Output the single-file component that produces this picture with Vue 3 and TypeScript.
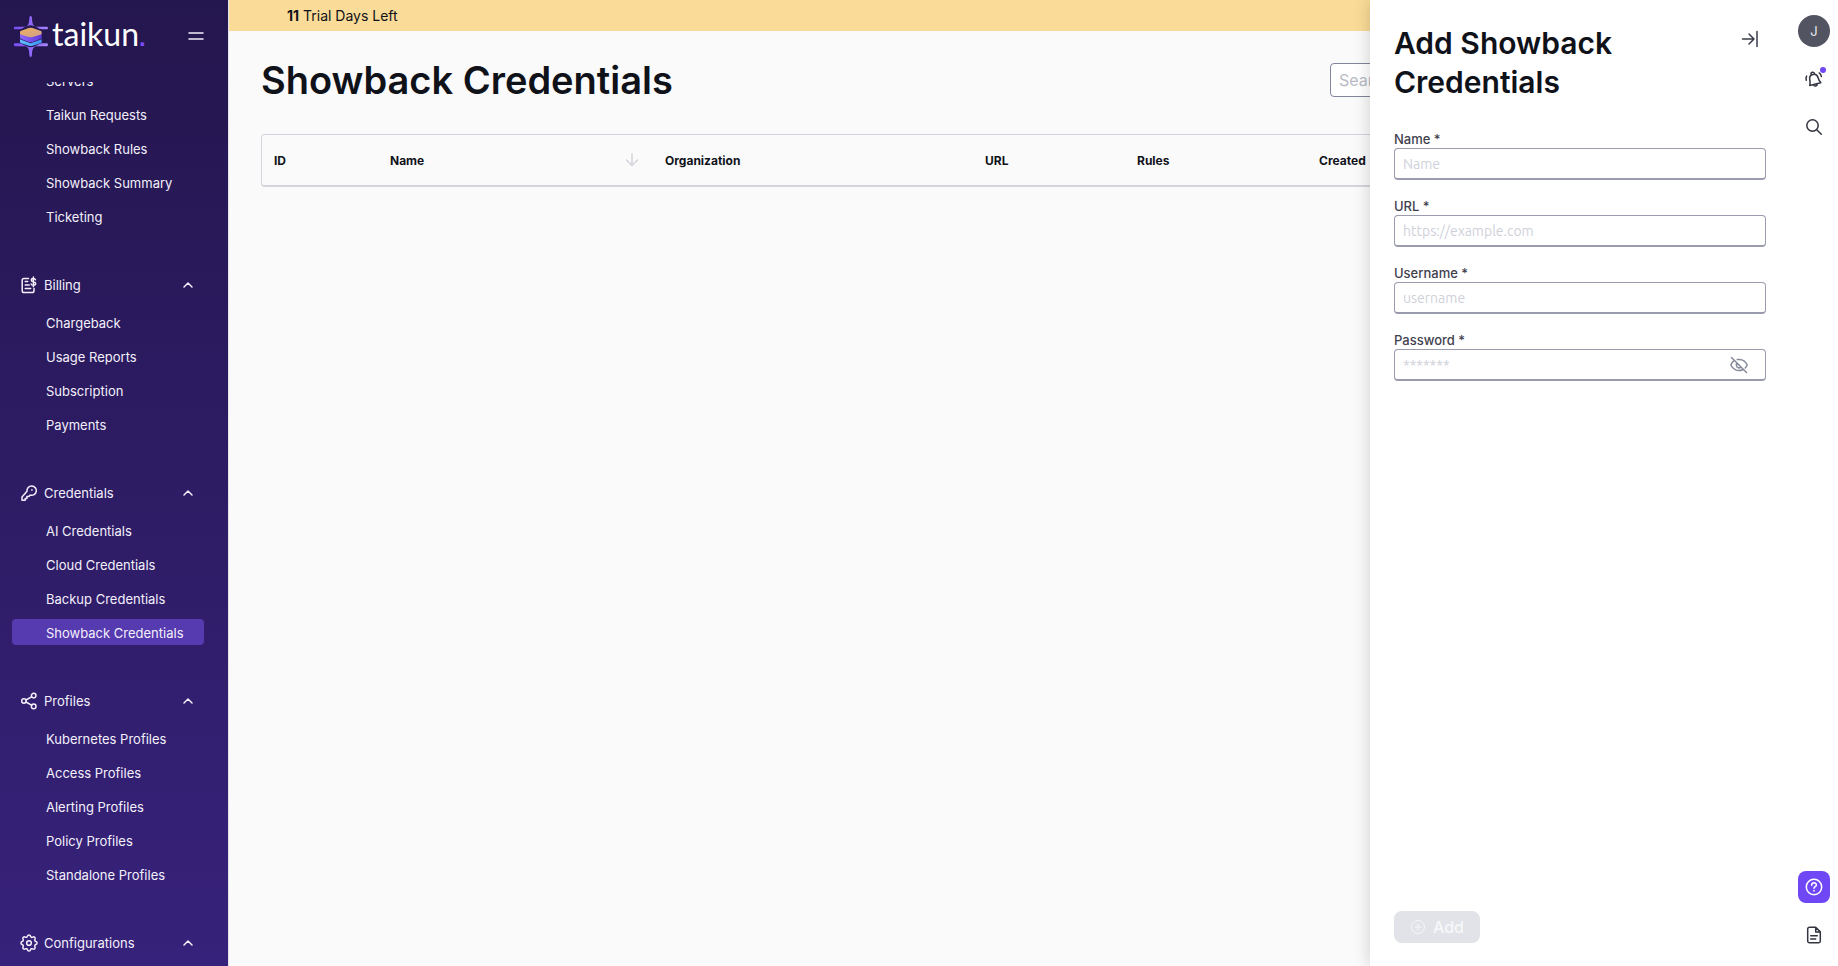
<script setup lang="ts">
import { onMounted, ref } from 'vue'

interface NavGroup {
  title?: string
  icon?: 'billing' | 'key' | 'share' | 'gear'
  items: string[]
}

interface Field {
  id: string
  label: string
  placeholder: string
  type: 'text' | 'password'
}

const groups: NavGroup[] = [
  { items: ['Servers', 'Taikun Requests', 'Showback Rules', 'Showback Summary', 'Ticketing'] },
  { title: 'Billing', icon: 'billing', items: ['Chargeback', 'Usage Reports', 'Subscription', 'Payments'] },
  {
    title: 'Credentials',
    icon: 'key',
    items: ['AI Credentials', 'Cloud Credentials', 'Backup Credentials', 'Showback Credentials'],
  },
  {
    title: 'Profiles',
    icon: 'share',
    items: ['Kubernetes Profiles', 'Access Profiles', 'Alerting Profiles', 'Policy Profiles', 'Standalone Profiles'],
  },
  { title: 'Configurations', icon: 'gear', items: [] },
]

const activeItem = 'Showback Credentials'

const fields: Field[] = [
  { id: 'name', label: 'Name *', placeholder: 'Name', type: 'text' },
  { id: 'url', label: 'URL *', placeholder: 'https://example.com', type: 'text' },
  { id: 'username', label: 'Username *', placeholder: 'username', type: 'text' },
  { id: 'password', label: 'Password *', placeholder: '*******', type: 'password' },
]

const form = ref<Record<string, string>>({ name: '', url: '', username: '', password: '' })
const search = ref('')
const nav = ref<HTMLElement | null>(null)

onMounted(() => {
  if (nav.value) nav.value.scrollTop = 15
})
</script>

<template>
  <div class="app">
    <aside class="sidebar">
      <div class="brand-row">
        <a class="brand" href="#">
          <svg class="brand-mark" viewBox="0 0 102 123" aria-hidden="true">
            <defs>
              <linearGradient id="wing" x1="0" x2="1" y1="0" y2="0">
                <stop offset="0" stop-color="#7a4cf5" />
                <stop offset="1" stop-color="#a585fb" />
              </linearGradient>
              <linearGradient id="gold" x1="0" x2="1" y1="0" y2="1">
                <stop offset="0" stop-color="#eeb05c" />
                <stop offset="1" stop-color="#cfa08f" />
              </linearGradient>
              <linearGradient id="violet" x1="0" x2="1" y1="0" y2="0">
                <stop offset="0" stop-color="#8f68fb" />
                <stop offset="1" stop-color="#6036dc" />
              </linearGradient>
              <linearGradient id="sky" x1="0" x2="1" y1="0" y2="0">
                <stop offset="0" stop-color="#62bcff" />
                <stop offset="1" stop-color="#3f94fb" />
              </linearGradient>
            </defs>
            <path
              fill="url(#wing)"
              d="M50 0c3 0 4 3 4 8 1 14 3 23 14 24h31c4 0 4 8 0 8H85c-8 0-10-3-16-6-7-3-12-6-19-6s-12 3-19 6c-6 3-8 6-16 6H2c-4 0-3-8 1-8h29c11-1 13-10 14-24 0-5 1-8 4-8z"
            />
            <path
              fill="url(#wing)"
              d="M50 123c3 0 4-3 4-8 1-14 3-23 14-24h31c4 0 4-9 0-9H85c-8 0-10 3-16 6-7 3-12 6-19 6s-12-3-19-6c-6-3-8-6-16-6H2c-4 0-3 9 1 9h29c11 1 13 10 14 24 0 5 1 8 4 8z"
            />
            <path fill="url(#sky)" d="M18 70l32 12 33-12v8c0 2-2 3-4 4L56 89q-6 2-12 0L22 82c-2-1-4-2-4-4z" />
            <path fill="url(#violet)" d="M18 52l32 12 33-12v13c0 2-2 3-4 4L56 78q-6 2-12 0L22 69c-2-1-4-2-4-4z" />
            <path fill="url(#gold)" d="M44 36q6-2 12 0l23 8c4 1 4 3 4 6s0 4-4 6l-23 7q-6 2-12 0l-22-7c-4-2-4-3-4-6s0-5 4-6z" />
          </svg>
          <span class="brand-name">taikun<span class="brand-dot">.</span></span>
        </a>
        <button class="menu-toggle" type="button" aria-label="Collapse menu">
          <svg viewBox="0 0 24 24" aria-hidden="true"><path d="M5 9h14M5 15h14" /></svg>
        </button>
      </div>

      <nav ref="nav" class="nav">
        <section v-for="(group, index) in groups" :key="index" class="group">
          <button v-if="group.title" class="group-head" type="button">
            <svg v-if="group.icon === 'billing'" class="group-icon" viewBox="0 0 16 18" aria-hidden="true">
              <path d="M7.500 2.500H3A1.800 1.800 0 0 0 1.200 4.300v10.400A1.800 1.800 0 0 0 3 16.500h8.200a1.800 1.800 0 0 0 1.800-1.800V12.500M4.200 5.500h2.500M4.200 9h4M4.200 12.500h5.500" />
              <path d="M14.500 3.800c-.4-.9-1.200-1.200-2.200-1.200-1.200 0-2 .6-2 1.600 0 2.200 4.400 1 4.400 3.400 0 1.100-1 1.700-2.300 1.700-1.100 0-2-.4-2.300-1.400M12.400 1v9.800" />
            </svg>
            <svg v-else-if="group.icon === 'key'" class="group-icon" viewBox="0 0 16 18" aria-hidden="true">
              <path d="M6 7.200a4.700 4.700 0 1 1 3.200 3.900L7.600 12.600H5.900v1.900H4.200v1.800H1v-3.200z" />
              <path d="M10.700 5.900h.4" />
            </svg>
            <svg v-else-if="group.icon === 'share'" class="group-icon" viewBox="0 0 16 18" aria-hidden="true">
              <circle cx="2.900" cy="9" r="2.200" />
              <circle cx="12.700" cy="3.600" r="2.300" />
              <circle cx="12.700" cy="14.400" r="2.300" />
              <path d="M4.900 8l5.700-3.200M4.900 10l5.700 3.200" />
            </svg>
            <svg v-else class="group-icon gear" viewBox="3 2 18 20" aria-hidden="true">
              <circle cx="12" cy="12" r="2.600" />
              <path
                d="M10.300 4.300c.4-1.800 3-1.800 3.400 0a1.700 1.700 0 0 0 2.600 1.100c1.500-1 3.300.8 2.400 2.400a1.700 1.700 0 0 0 1 2.500c1.800.4 1.800 3 0 3.400a1.700 1.700 0 0 0-1 2.600c.9 1.500-.9 3.300-2.400 2.400a1.700 1.700 0 0 0-2.600 1c-.4 1.800-3 1.800-3.400 0a1.700 1.700 0 0 0-2.600-1c-1.500.9-3.300-.9-2.400-2.400a1.700 1.700 0 0 0-1-2.600c-1.800-.4-1.800-3 0-3.400a1.700 1.700 0 0 0 1-2.600c-.9-1.500.9-3.300 2.400-2.300 1 .6 2.300 0 2.600-1.100z"
              />
            </svg>
            <span>{{ group.title }}</span>
            <svg class="chevron" viewBox="0 0 12 12" aria-hidden="true"><path d="M2 8l4-4 4 4" /></svg>
          </button>
          <ul v-if="group.items.length" class="items">
            <li v-for="item in group.items" :key="item">
              <a class="item" :class="{ active: item === activeItem }" href="#">{{ item }}</a>
            </li>
          </ul>
        </section>
      </nav>
    </aside>

    <main class="main">
      <div class="banner"><strong>11</strong> Trial Days Left</div>
      <div class="page">
        <header class="page-head">
          <h1>Showback Credentials</h1>
          <input v-model="search" class="search" type="text" placeholder="Search" aria-label="Search" />
        </header>
        <div class="table-card">
          <table>
            <colgroup>
              <col class="c-id" />
              <col class="c-name" />
              <col class="c-org" />
              <col class="c-url" />
              <col class="c-rules" />
              <col />
            </colgroup>
            <thead>
              <tr>
                <th scope="col">ID</th>
                <th scope="col">
                  <div class="sortable">
                    Name
                    <svg viewBox="0 0 14 14" aria-hidden="true"><path d="M7 1v11.500M1.500 7L7 12.500 12.500 7" /></svg>
                  </div>
                </th>
                <th scope="col">Organization</th>
                <th scope="col">URL</th>
                <th scope="col">Rules</th>
                <th scope="col">Created</th>
              </tr>
            </thead>
          </table>
        </div>
      </div>
    </main>

    <section class="drawer" aria-labelledby="drawer-title">
      <form class="form" @submit.prevent>
        <header class="drawer-head">
          <h2 id="drawer-title">Add Showback Credentials</h2>
          <button class="close" type="button" aria-label="Close panel">
            <svg viewBox="0 0 16 16" aria-hidden="true"><path d="M.5 8H12M7 3l5 5-5 5M15 .5v15" /></svg>
          </button>
        </header>
        <div class="fields">
          <div v-for="field in fields" :key="field.id" class="field">
            <label :for="field.id">{{ field.label }}</label>
            <div class="control">
              <input :id="field.id" v-model="form[field.id]" :type="field.type" :placeholder="field.placeholder" />
              <button v-if="field.type === 'password'" class="reveal" type="button" aria-label="Show password">
                <svg viewBox="0 0 18 18" aria-hidden="true">
                  <path d="M1.500 1.500l15 15M7.300 3.600C12.500 2.800 15.700 5.600 17.200 9c-.5 1.200-1.200 2.200-2 3M4 4.700C2.600 5.800 1.500 7.200.8 9c2 4.600 7 6.900 11.800 4.700M6.500 7.600A2.900 2.900 0 0 0 10.400 11.500M9 9l-2.400-1.500" />
                </svg>
              </button>
            </div>
          </div>
        </div>
        <button class="add" type="submit" disabled>
          <svg viewBox="0 0 16 16" aria-hidden="true">
            <circle cx="8" cy="8" r="6.500" />
            <path d="M8 5v6M5 8h6" />
          </svg>
          Add
        </button>
      </form>

      <div class="rail">
        <button class="avatar" type="button">J</button>
        <button class="rail-button" type="button" aria-label="Notifications">
          <svg viewBox="0 0 18 18" aria-hidden="true">
            <g transform="rotate(-14 9 9)">
              <path d="M3.300 14.200c1.300-1.600 1.300-3.400 1.400-5.500C4.800 6.200 6.500 4.400 9 4.400s4.200 1.800 4.300 4.300c.1 2.100.1 3.900 1.400 5.500zM7 14.500c.3 2.300 3.700 2.300 4 0M7.300 4.500C6.500 1.200 11.500 1.200 10.700 4.500" />
              <path d="M1.200 8.400c-.1-1.600.4-3 1.300-4M16.800 8.400c.1-1.600-.4-3-1.300-4" />
            </g>
          </svg>
          <span class="badge"></span>
        </button>
        <button class="rail-button" type="button" aria-label="Search">
          <svg viewBox="0 0 18 18" aria-hidden="true">
            <circle cx="7.500" cy="7.500" r="5.700" />
            <path d="M11.700 11.700l4.600 4.600" />
          </svg>
        </button>
        <span class="spacer"></span>
        <button class="rail-button help" type="button" aria-label="Help">
          <svg viewBox="0 0 18 18" aria-hidden="true">
            <circle cx="9" cy="9" r="7.700" />
            <path d="M6.700 7.200C6.700 4 11.400 4.100 11.400 6.900c0 1.800-2.400 1.700-2.400 3.400M9 12.600v.4" />
          </svg>
        </button>
        <button class="rail-button" type="button" aria-label="Documentation">
          <svg viewBox="0 0 18 18" aria-hidden="true">
            <path d="M10.700 1.300H4.500A1.800 1.800 0 0 0 2.700 3.100v11.800a1.800 1.800 0 0 0 1.800 1.800h9a1.800 1.800 0 0 0 1.800-1.800V5.900zM10.700 1.300v4.600h4.600M5.700 9.700h6.600M5.700 13h5" />
          </svg>
        </button>
      </div>
    </section>
  </div>
</template>

<style>
body {
  margin: 0;
  background: #fafafa;
}
</style>

<style scoped>
.app {
  position: relative;
  display: flex;
  height: 100vh;
  overflow: hidden;
  font-family: Inter, "Liberation Sans", sans-serif;
  color: #10121a;
}

.app * {
  box-sizing: border-box;
}

button {
  padding: 0;
  border: 0;
  background: none;
  font: inherit;
  color: inherit;
  cursor: pointer;
}

svg {
  display: block;
  flex: none;
  overflow: visible;
  fill: none;
  stroke: currentColor;
  stroke-width: 1.5;
  stroke-linecap: round;
  stroke-linejoin: round;
}

/* Sidebar */
.sidebar {
  display: flex;
  flex: none;
  flex-direction: column;
  width: 228px;
  background: linear-gradient(#24164e, #37227b);
  color: #f3f0fb;
  font-size: 13px;
}

.brand-row {
  display: flex;
  flex: none;
  align-items: center;
  justify-content: space-between;
  height: 82px;
  padding: 0 20px 10px 14px;
}

.brand {
  display: flex;
  align-items: center;
  gap: 4px;
  color: #fff;
  text-decoration: none;
}

.brand-mark {
  width: 34px;
  height: 41px;
  stroke: none;
}

.brand-name {
  font-family: Lato, sans-serif;
  font-size: 32px;
  line-height: 40px;
}

.brand-dot {
  color: #7b4dfa;
  font-family: "Liberation Sans", sans-serif;
  font-size: 24px;
  font-weight: 700;
}

.menu-toggle svg {
  width: 24px;
  height: 24px;
}

.nav {
  flex: 1;
  min-height: 0;
  padding: 0 24px 0 12px;
  overflow-y: auto;
  scrollbar-width: none;
}

.group {
  padding-bottom: 44px;
}

.group-head {
  display: flex;
  align-items: center;
  gap: 7px;
  width: 100%;
  height: 24px;
  padding: 0 10px 0 9px;
  margin-bottom: 12px;
}

.group-icon {
  width: 16px;
  height: 18px;
}

.gear {
  stroke-width: 1.7;
}

.chevron {
  width: 12px;
  height: 12px;
  margin-left: auto;
}

.items {
  display: grid;
  gap: 8px;
  margin: 0;
  padding: 0;
  list-style: none;
}

.item {
  display: block;
  height: 26px;
  padding-left: 34px;
  border-radius: 4px;
  color: inherit;
  line-height: 28px;
  text-decoration: none;
}

.item.active {
  background: #563ab0;
}

/* Main content */
.main {
  flex: 1;
  min-width: 0;
  border-left: 1px solid #e4e4ec;
  background: #fafafa;
}

.banner {
  height: 31px;
  padding-left: 58px;
  background: #fadb97;
  font-size: 14px;
  line-height: 31px;
}

.page {
  padding: 24px 80px 0 32px;
}

.page-head {
  display: flex;
  align-items: center;
  justify-content: space-between;
  height: 50px;
  margin-bottom: 29px;
}

h1,
h2 {
  margin: 0;
  font-weight: 600;
}

h1 {
  font-size: 38px;
  line-height: 50px;
}

.search {
  width: 428px;
  height: 34px;
  padding: 0 8px;
  border: 1px solid #82869a;
  border-radius: 4px;
  background: #fff;
  font: inherit;
  font-size: 16px;
}

.search::placeholder {
  color: #b9bbc6;
}

.table-card {
  overflow: hidden;
  border: 1px solid #d3d4dc;
  border-bottom-width: 2px;
  border-radius: 4px;
}

table {
  width: 100%;
  border-collapse: collapse;
  table-layout: fixed;
}

.c-id {
  width: 116px;
}

.c-name {
  width: 275px;
}

.c-org {
  width: 320px;
}

.c-url {
  width: 152px;
}

.c-rules {
  width: 182px;
}

th {
  height: 50px;
  padding: 0 12px;
  font-size: 12px;
  font-weight: 700;
  text-align: left;
}

.sortable {
  display: flex;
  align-items: center;
  justify-content: space-between;
  padding-right: 2px;
}

.sortable svg {
  width: 14px;
  height: 14px;
  color: #d3d5dc;
}

/* Drawer */
.drawer {
  position: absolute;
  top: 0;
  right: 0;
  bottom: 0;
  display: flex;
  width: 468px;
  background: #fff;
  box-shadow: 0 0 16px rgba(0, 0, 0, 0.18);
}

.form {
  display: flex;
  flex: 1;
  flex-direction: column;
  align-items: stretch;
  padding: 24px 24px 23px;
}

.drawer-head {
  display: flex;
  align-items: flex-start;
  justify-content: space-between;
  margin-bottom: 29px;
}

h2 {
  max-width: 280px;
  font-size: 30px;
  line-height: 39px;
}

.close {
  padding: 7px 8px;
  color: #3a3c49;
}

.close svg {
  width: 16px;
  height: 16px;
}

.fields {
  display: grid;
  flex: 1;
  gap: 18px;
  align-content: start;
}

.field label {
  display: block;
  color: #3f414e;
  font-size: 13px;
  font-weight: 500;
  line-height: 17px;
}

.control {
  display: flex;
  align-items: center;
  height: 32px;
  border: 1px solid #9a9cae;
  border-bottom-width: 2px;
  border-radius: 4px;
  background: #fff;
}

.control input {
  flex: 1;
  min-width: 0;
  height: 100%;
  padding: 0 8px;
  border: 0;
  outline: 0;
  background: none;
  font-family: Ubuntu, "Noto Sans", sans-serif;
  font-size: 14px;
}

.control input::placeholder {
  color: #cfd1da;
}

.reveal {
  padding: 0 17px;
  color: #868a9b;
}

.reveal svg {
  width: 18px;
  height: 18px;
}

.add {
  display: flex;
  align-items: center;
  align-self: flex-start;
  gap: 7px;
  height: 32px;
  padding: 0 16px;
  border-radius: 8px;
  background: #e2e3e8;
  color: #f7f7fa;
  font-size: 16px;
  font-weight: 500;
}

.add svg {
  width: 16px;
  height: 16px;
  stroke-width: 1;
}

.rail {
  display: flex;
  flex: none;
  flex-direction: column;
  gap: 16px;
  width: 48px;
  padding: 15px 8px;
}

.rail-button {
  position: relative;
  display: grid;
  place-items: center;
  width: 32px;
  height: 32px;
  border-radius: 8px;
  color: #32343f;
}

.rail-button svg {
  width: 18px;
  height: 18px;
}

.avatar {
  width: 32px;
  height: 32px;
  border-radius: 50%;
  background: #525461;
  color: #e8e9ef;
  font-size: 13px;
}

.badge {
  position: absolute;
  top: 4px;
  right: 4px;
  width: 6px;
  height: 6px;
  border-radius: 50%;
  background: #7047f5;
}

.help {
  background: #7047f5;
  color: #fff;
}

.spacer {
  flex: 1;
}
</style>
